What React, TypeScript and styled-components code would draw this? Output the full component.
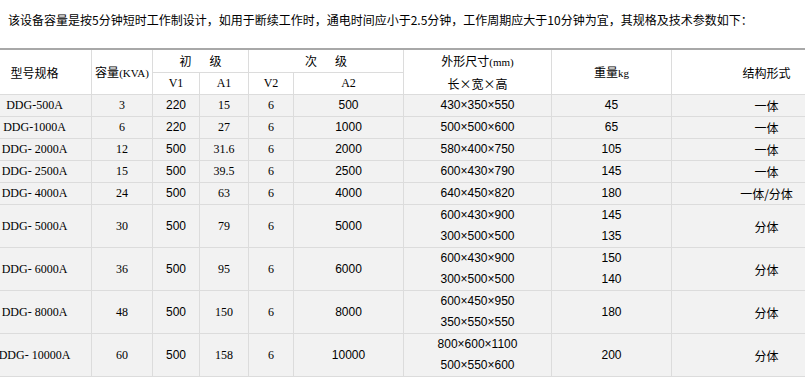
import styled, { createGlobalStyle } from "styled-components";

const GlobalStyle = createGlobalStyle`
  html, body {
    margin: 0;
    padding: 0;
    background: #fff;
    overflow: hidden;
  }
`;

type Row = {
  model: string;
  kva: string;
  v1: string;
  a1: string;
  v2: string;
  a2: string;
  dims: string[];
  weight: string[];
  form: string;
};

const rows: Row[] = [
  { model: "DDG-500A", kva: "3", v1: "220", a1: "15", v2: "6", a2: "500", dims: ["430×350×550"], weight: ["45"], form: "一体" },
  { model: "DDG-1000A", kva: "6", v1: "220", a1: "27", v2: "6", a2: "1000", dims: ["500×500×600"], weight: ["65"], form: "一体" },
  { model: "DDG- 2000A", kva: "12", v1: "500", a1: "31.6", v2: "6", a2: "2000", dims: ["580×400×750"], weight: ["105"], form: "一体" },
  { model: "DDG- 2500A", kva: "15", v1: "500", a1: "39.5", v2: "6", a2: "2500", dims: ["600×430×790"], weight: ["145"], form: "一体" },
  { model: "DDG- 4000A", kva: "24", v1: "500", a1: "63", v2: "6", a2: "4000", dims: ["640×450×820"], weight: ["180"], form: "一体/分体" },
  { model: "DDG- 5000A", kva: "30", v1: "500", a1: "79", v2: "6", a2: "5000", dims: ["600×430×900", "300×500×500"], weight: ["145", "135"], form: "分体" },
  { model: "DDG- 6000A", kva: "36", v1: "500", a1: "95", v2: "6", a2: "6000", dims: ["600×430×900", "300×500×500"], weight: ["150", "140"], form: "分体" },
  { model: "DDG- 8000A", kva: "48", v1: "500", a1: "150", v2: "6", a2: "8000", dims: ["600×450×950", "350×550×550"], weight: ["180"], form: "分体" },
  { model: "DDG- 10000A", kva: "60", v1: "500", a1: "158", v2: "6", a2: "10000", dims: ["800×600×1100", "500×550×600"], weight: ["200"], form: "分体" },
];

const widths = [114, 61, 47, 49, 45, 110, 148, 120, 190];

export default function App() {
  return (
    <Page>
      <GlobalStyle />
      <Intro>
        该设备容量是按5分钟短时工作制设计，如用于断续工作时，通电时间应小于2.5分钟，工作周期应大于10分钟为宜，其规格及技术参数如下：
      </Intro>
      <Table>
        <colgroup>
          {widths.map((w, i) => (
            <col key={i} style={{ width: w }} />
          ))}
        </colgroup>
        <thead>
          <HeadRow>
            <HeadCell rowSpan={2}>型号规格</HeadCell>
            <HeadCell rowSpan={2}>
              容量<Small>(KVA)</Small>
            </HeadCell>
            <HeadCell colSpan={2}>
              初<Gap />级
            </HeadCell>
            <HeadCell colSpan={2}>
              次<Gap />级
            </HeadCell>
            <HeadCell rowSpan={2}>
              <Line>外形尺寸<Small>(mm)</Small></Line>
              <Line>长×宽×高</Line>
            </HeadCell>
            <HeadCell rowSpan={2}>
              重量<Small>kg</Small>
            </HeadCell>
            <HeadCell rowSpan={2}>结构形式</HeadCell>
          </HeadRow>
          <HeadRow $second>
            <SubCell>V1</SubCell>
            <SubCell>A1</SubCell>
            <SubCell>V2</SubCell>
            <SubCell>A2</SubCell>
          </HeadRow>
        </thead>
        <tbody>
          {rows.map((r) => (
            <BodyRow key={r.model} $tall={r.dims.length > 1}>
              <Cell>{r.model}</Cell>
              <Cell>{r.kva}</Cell>
              <Cell $sans>{r.v1}</Cell>
              <Cell>{r.a1}</Cell>
              <Cell>{r.v2}</Cell>
              <Cell $sans>{r.a2}</Cell>
              <Cell $sans>
                {r.dims.map((d) => (
                  <Line key={d}>{d}</Line>
                ))}
              </Cell>
              <Cell $sans>
                {r.weight.map((w) => (
                  <Line key={w}>{w}</Line>
                ))}
              </Cell>
              <Cell $cjk>{r.form}</Cell>
            </BodyRow>
          ))}
        </tbody>
      </Table>
    </Page>
  );
}

const Page = styled.div`
  width: 805px;
  height: 392px;
  overflow: hidden;
  color: #000;
`;

const Intro = styled.p`
  margin: 0;
  padding: 10px 0 0 8px;
  font-family: "Noto Sans CJK SC", "Liberation Sans", sans-serif;
  font-size: 12px;
  line-height: 20px;
  white-space: nowrap;
`;

const Table = styled.table`
  margin-top: 18px;
  margin-left: -23px;
  width: 884px;
  table-layout: fixed;
  border-collapse: collapse;
  border-top: 2px solid #a8a8a8;
`;

const HeadRow = styled.tr<{ $second?: boolean }>`
  height: ${(p) => (p.$second ? 22 : 21)}px;
  background: #fff;
`;

const HeadCell = styled.th`
  padding: 0;
  border: 1px solid #dcdcdc;
  border-top: none;
  font-family: "Noto Sans CJK SC", "Liberation Sans", sans-serif;
  font-size: 12px;
  font-weight: normal;
  line-height: 21px;
  text-align: center;
  vertical-align: middle;
`;

const SubCell = styled(HeadCell)`
  font-family: "Liberation Serif", "Noto Sans CJK SC", serif;
`;

const Gap = styled.span`
  display: inline-block;
  width: 18px;
`;

const Small = styled.span`
  font-family: "Liberation Serif", serif;
  font-size: 11px;
`;

const BodyRow = styled.tr<{ $tall?: boolean }>`
  height: ${(p) => (p.$tall ? 43 : 22)}px;
  background: #f2f2f2;
`;

const Cell = styled.td<{ $sans?: boolean; $cjk?: boolean }>`
  padding: 0;
  border: 1px solid #dcdcdc;
  font-family: ${(p) =>
    p.$cjk
      ? '"Noto Sans CJK SC", sans-serif'
      : p.$sans
      ? '"Liberation Sans", "Noto Sans CJK SC", sans-serif'
      : '"Liberation Serif", "Noto Sans CJK SC", serif'};
  font-size: 12px;
  line-height: 21px;
  text-align: center;
  vertical-align: middle;
  white-space: pre;
`;

const Line = styled.div`
  line-height: 21px;
`;
